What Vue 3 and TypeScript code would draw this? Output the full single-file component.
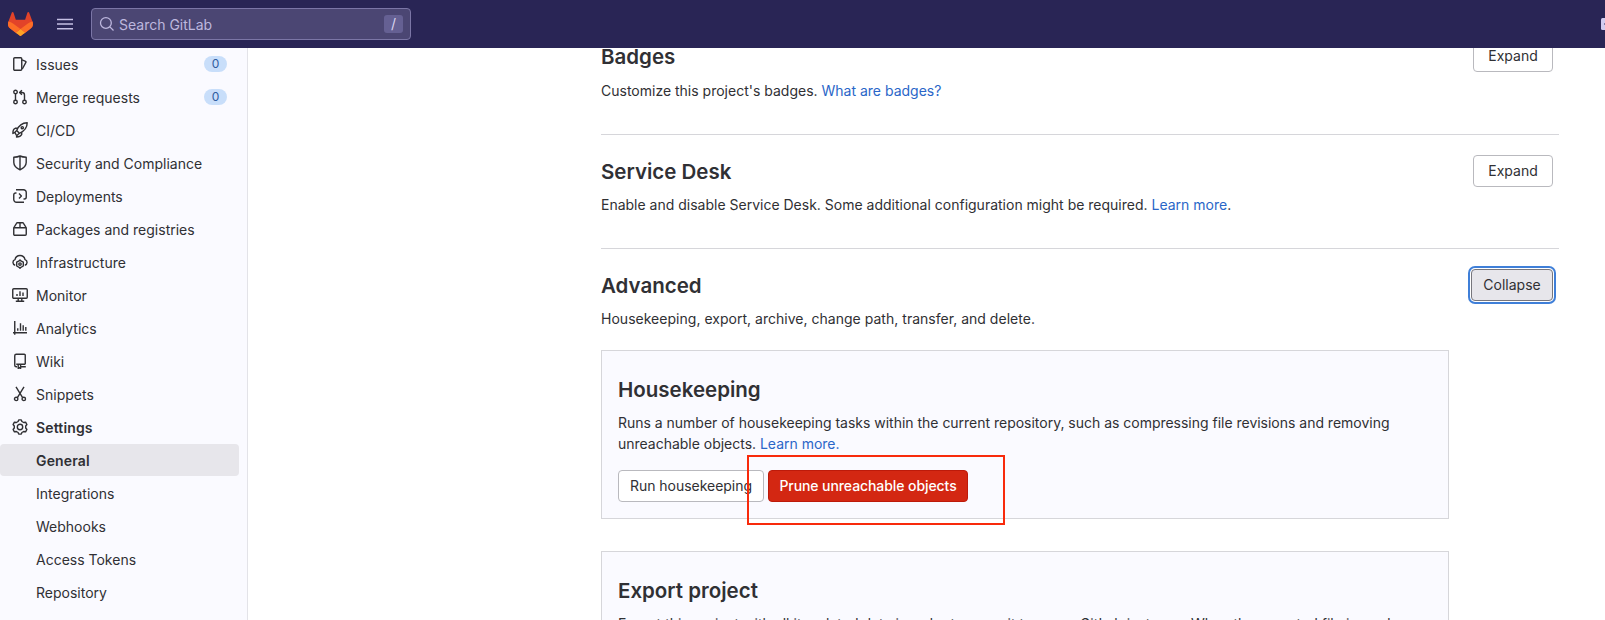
<script setup lang="ts">
interface NavItem {
  label: string
  icon: string
  count?: number
}

const navItems: NavItem[] = [
  { label: 'Issues', icon: 'issues', count: 0 },
  { label: 'Merge requests', icon: 'merge', count: 0 },
  { label: 'CI/CD', icon: 'rocket' },
  { label: 'Security and Compliance', icon: 'shield' },
  { label: 'Deployments', icon: 'deployments' },
  { label: 'Packages and registries', icon: 'package' },
  { label: 'Infrastructure', icon: 'cloud' },
  { label: 'Monitor', icon: 'monitor' },
  { label: 'Analytics', icon: 'chart' },
  { label: 'Wiki', icon: 'book' },
  { label: 'Snippets', icon: 'snippet' },
  { label: 'Settings', icon: 'settings' },
]

const settingsItems: string[] = ['General', 'Integrations', 'Webhooks', 'Access Tokens', 'Repository']

const icons: Record<string, string[]> = {
  issues: [
    'M2.75 1.75h6a1 1 0 0 1 1 1v10.5a1 1 0 0 1-1 1h-6a1 1 0 0 1-1-1V2.75a1 1 0 0 1 1-1z',
    'M10 3.9l3.6 1.4a.7.7 0 0 1 .4.9L10.3 13',
  ],
  merge: [
    'M3.5 4.9v6.2M12.5 11.1V6a2.5 2.5 0 0 0-2.5-2.5H8M9.9 1.2L7.6 3.5l2.3 2.3',
    'M3.5 1.2a1.75 1.75 0 1 1 0 3.5a1.75 1.75 0 1 1 0-3.5z',
    'M3.5 11.2a1.75 1.75 0 1 1 0 3.5a1.75 1.75 0 1 1 0-3.5z',
    'M12.5 11.2a1.75 1.75 0 1 1 0 3.5a1.75 1.75 0 1 1 0-3.5z',
  ],
  rocket: [
    'M4.7 8.6C6.5 4 10 .9 15.2.8c0 5.2-3.2 8.5-7.8 10.5z',
    'M5.6 6.3H3.2C1.6 7 .8 9 .9 11.5l2-1.2M9.7 10.2v2.3c-.8 1.6-2.6 2.5-5.2 2.5l.8-2M4.7 8.6l-1.8 1.7 1.3 2.7 1.2.1 2-1.8',
    'M10.3 4.6a1.1 1.1 0 1 1 0 2.2a1.1 1.1 0 1 1 0-2.2z',
  ],
  shield: [
    'M8 1c2 .9 3.9 1.2 6.2 1.3v5.2c0 3.4-2.6 5.6-6.2 7.4-3.6-1.8-6.2-4-6.2-7.4V2.3C4.1 2.2 6 1.9 8 1zM8 1v13.8',
  ],
  deployments: [
    'M4 1.75h7.5a2.75 2.75 0 0 1 2.75 2.75v4.6a1.9 1.9 0 0 1-1.9 1.9H11.5',
    'M12 14.25H4.5a2.75 2.75 0 0 1-2.75-2.75V6.9a1.9 1.9 0 0 1 1.9-1.9H4.5',
    'M7 5.6L9.4 8 7 10.4',
  ],
  package: [
    'M1.75 6.75h12.5v6.5a1 1 0 0 1-1 1H2.75a1 1 0 0 1-1-1zM1.75 6.75L4.5 2.3a1 1 0 0 1 .9-.55h5.2a1 1 0 0 1 .9.55l2.75 4.45M8 1.75v5',
  ],
  cloud: [
    'M3.2 11.2a2.9 2.9 0 0 1-.2-5.6A5.1 5.1 0 0 1 13 5.6a2.9 2.9 0 0 1-.2 5.6',
    'M8 6.3l3.3 1.9v3.8L8 13.9l-3.3-1.9V8.2z',
    'M8 8.9a1.2 1.2 0 1 1 0 2.4a1.2 1.2 0 1 1 0-2.4z',
    'M8 5.6v1M8 13.6v1.2',
  ],
  monitor: [
    'M1.75 1.75h12.5a1 1 0 0 1 1 1v7.5a1 1 0 0 1-1 1H1.75a1 1 0 0 1-1-1v-7.5a1 1 0 0 1 1-1z',
    'M5 7v1.9M8 4.3v4.6M11 5.6v3.3M6.2 11.5v2.6M9.8 11.5v2.6M3.8 14.25h8.4',
  ],
  chart: ['M2.75 1v13.7M1 12.75h14M5.75 8.3v2.4M8.5 3.3v7.4M11.2 5.2v5.5M13.8 7v3.7'],
  book: [
    'M13.25 11.25V2.25a1 1 0 0 0-1-1H4.25a1.5 1.5 0 0 0-1.5 1.5v9.5a1.5 1.5 0 0 0 1.5 1.5H5M4.25 11.25h9M8.7 13.75h5.1M6.2 11.5v4l1.2-.9 1.2.9v-4',
  ],
  snippet: [
    'M4 .8l6.6 10.8M12 .8L5.4 11.6',
    'M4.2 11.2a1.7 1.7 0 1 1 0 3.4a1.7 1.7 0 1 1 0-3.4z',
    'M11.8 11.2a1.7 1.7 0 1 1 0 3.4a1.7 1.7 0 1 1 0-3.4z',
  ],
  settings: [
    'M6.7.9h2.6l.6 1.6 1.7 1 2-.3 1.3 2.3L13.7 7v2l1.2 1.5-1.3 2.3-2-.3-1.7 1-.6 1.6H6.7l-.6-1.6-1.7-1-2 .3-1.300-2.300L2.300 9V7L1.100 5.500l1.300-2.300 2 .3 1.700-1z',
    'M8 5.3a2.7 2.7 0 1 1 0 5.4a2.7 2.7 0 1 1 0-5.4z',
  ],
}
</script>

<template>
  <div class="page">
    <header class="topbar">
      <svg class="logo" viewBox="0 0 25 24" width="25" height="24">
        <path fill="#e24329" d="m24.507 9.5-.034-.09L21.082.562a.896.896 0 0 0-1.694.091l-2.29 7.01H7.825L5.535.653a.898.898 0 0 0-1.694-.09L.451 9.411.416 9.5a6.297 6.297 0 0 0 2.09 7.278l.012.01.03.022 5.16 3.867 2.56 1.935 1.554 1.176a1.051 1.051 0 0 0 1.268 0l1.555-1.176 2.56-1.935 5.197-3.89.014-.01A6.297 6.297 0 0 0 24.507 9.5Z" />
        <path fill="#fc6d26" d="m24.507 9.5-.034-.09a11.44 11.44 0 0 0-4.56 2.051l-7.447 5.632 4.742 3.584 5.197-3.89.014-.01A6.297 6.297 0 0 0 24.507 9.5Z" />
        <path fill="#fca326" d="m7.707 20.677 2.56 1.935 1.555 1.176a1.051 1.051 0 0 0 1.268 0l1.555-1.176 2.56-1.935-4.743-3.584-4.755 3.584Z" />
        <path fill="#fc6d26" d="M5.01 11.461a11.43 11.43 0 0 0-4.56-2.05L.416 9.5a6.297 6.297 0 0 0 2.09 7.278l.012.01.03.022 5.16 3.867 4.745-3.584-7.444-5.632Z" />
      </svg>
      <svg class="burger" viewBox="0 0 16 16" width="16" height="16">
        <path d="M0 3.5h16M0 8.1h16M0 12.7h16" />
      </svg>
      <div class="search">
        <svg viewBox="0 0 16 16" width="16" height="16">
          <path d="M6.9 1.55a5.4 5.4 0 1 1 0 10.8a5.4 5.4 0 1 1 0-10.8zM10.9 10.9l3.6 3.6" />
        </svg>
        <span class="search-text">Search GitLab</span>
        <kbd>/</kbd>
      </div>
      <svg class="create" viewBox="0 0 16 12" width="16" height="12">
        <rect width="16" height="12" rx="1.5" fill="#d1cbf0" />
        <path d="M3.2 6h7M6.7 2.5v7" stroke="#4b4673" stroke-width="1.5" />
      </svg>
    </header>

    <div class="body">
      <nav class="sidebar">
        <a v-for="item in navItems" :key="item.label" class="nav-row" :class="{ current: item.label === 'Settings' }">
          <svg class="nav-icon" viewBox="0 0 16 16" width="16" height="16">
            <path v-for="d in icons[item.icon]" :key="d" :d="d" />
          </svg>
          <span class="nav-label">{{ item.label }}</span>
          <span v-if="item.count !== undefined" class="count">{{ item.count }}</span>
        </a>
        <a v-for="name in settingsItems" :key="name" class="nav-row sub" :class="{ active: name === 'General' }">
          <span class="nav-label">{{ name }}</span>
        </a>
      </nav>

      <main class="content">
        <section class="setting first">
          <div class="setting-text">
            <h4>Badges</h4>
            <p>Customize this project's badges. <a class="link">What are badges?</a></p>
          </div>
          <button class="btn">Expand</button>
        </section>
        <section class="setting">
          <div class="setting-text">
            <h4>Service Desk</h4>
            <p>Enable and disable Service Desk. Some additional configuration might be required. <a class="link">Learn more</a>.</p>
          </div>
          <button class="btn">Expand</button>
        </section>
        <section class="setting last">
          <div class="setting-text">
            <h4>Advanced</h4>
            <p class="wide">Housekeeping, export, archive, change path, transfer, and delete.</p>
          </div>
          <button class="btn focused">Collapse</button>
        </section>

        <div class="cards">
          <section class="card">
            <h4>Housekeeping</h4>
            <p class="tight">
              Runs a number of housekeeping tasks within the current repository, such as compressing file revisions and removing<br />
              unreachable objects. <a class="link">Learn more.</a>
            </p>
            <div class="actions">
              <button class="btn run">Run housekeeping</button>
              <button class="btn danger">Prune unreachable objects</button>
              <div class="highlight"></div>
            </div>
          </section>
          <section class="card">
            <h4>Export project</h4>
            <p class="wide">Export this project with all its related data in order to move it to a new GitLab instance. When the exported file is ready,</p>
          </section>
        </div>
      </main>
    </div>
  </div>
</template>

<style>
body {
  overflow: hidden;
}
</style>

<style scoped>
.page {
  width: 1605px;
  height: 620px;
  overflow: hidden;
  display: flex;
  flex-direction: column;
  background: #fff;
  color: #303034;
  font-family: Inter, 'Noto Sans', sans-serif;
  font-size: 14px;
  line-height: 21px;
}
.topbar {
  flex: none;
  height: 48px;
  box-sizing: border-box;
  padding-left: 8px;
  display: flex;
  align-items: center;
  background: #292555;
  position: relative;
  z-index: 1;
}
.burger {
  margin: 0 18px 0 24px;
  fill: none;
  stroke: #c5c0e4;
  stroke-width: 1.5;
}
.search {
  width: 320px;
  height: 32px;
  box-sizing: border-box;
  padding: 0 7px;
  border: 1px solid #7b76a6;
  border-radius: 4px;
  background: #4b4673;
  display: flex;
  align-items: center;
  color: #bdb7de;
}
.search svg {
  fill: none;
  stroke: #bdb7de;
  stroke-width: 1.3;
}
.search-text {
  flex: 1;
  margin-left: 4px;
  padding-top: 1px;
}
kbd {
  width: 19px;
  height: 18px;
  border-radius: 3px;
  background: #656093;
  color: #d9d5f0;
  font: 14px/18px Inter, sans-serif;
  text-align: center;
}
.create {
  flex: none;
  margin-left: auto;
  margin-right: -12px;
}
.body {
  flex: 1;
  min-height: 0;
  display: flex;
}
.sidebar {
  flex: none;
  width: 248px;
  box-sizing: border-box;
  border-right: 1px solid #e3e3e8;
  background: #fafaff;
}
.nav-row {
  height: 32px;
  margin-bottom: 1px;
  margin-right: 8px;
  padding-left: 12px;
  padding-right: 12px;
  display: flex;
  align-items: center;
}
.nav-icon {
  flex: none;
  margin-right: 8px;
  fill: none;
  stroke: #303034;
  stroke-width: 1.4;
  stroke-linejoin: round;
}
.nav-label {
  flex: 1;
}
.current,
.active {
  font-weight: 600;
}
.current .nav-label,
.active .nav-label {
  letter-spacing: 0.15px;
}
.sub {
  padding-left: 36px;
}
.active {
  border-radius: 4px;
  background: #e7e6eb;
}
.count {
  width: 23px;
  height: 16px;
  border-radius: 8px;
  background: #c8defa;
  color: #2f5ca0;
  font-size: 12px;
  line-height: 16px;
  text-align: center;
}
.content {
  flex: none;
  width: 958px;
  margin-left: 353px;
  margin-top: -27px;
}
.setting {
  height: 114px;
  box-sizing: border-box;
  padding-top: 20px;
  padding-right: 6px;
  display: flex;
  justify-content: space-between;
  align-items: flex-start;
  border-bottom: 1px solid #d6d6da;
}
.setting.first {
  padding-top: 19px;
}
.setting.last {
  border-bottom: 0;
  height: 101px;
}
h4,
p {
  margin: 0;
}
h4 {
  font-size: 20.5px;
  line-height: 32px;
  font-weight: 600;
}
.setting h4 {
  margin-top: 1px;
}
.setting p {
  margin-top: 6px;
}
.setting.first p {
  margin-top: 7px;
}
.wide {
  letter-spacing: 0.02px;
}
.tight {
  letter-spacing: -0.015px;
}
.link {
  color: #2a66c8;
}
.btn {
  flex: none;
  height: 32px;
  width: 80px;
  padding: 0;
  border: 1px solid #b9b9be;
  border-radius: 4px;
  background: #fff;
  color: #303034;
  font: inherit;
  line-height: 30px;
}
.btn.focused {
  width: 82px;
  border-color: #77767c;
  background: #e7e6eb;
  box-shadow: 0 0 0 1px #fff, 0 0 0 3px #3f7fd8;
}
.cards {
  width: 848px;
}
.card {
  height: 169px;
  box-sizing: border-box;
  padding: 23px 16px 16px;
  margin-bottom: 32px;
  border: 1px solid #d6d6da;
  background: #fafaff;
  white-space: nowrap;
}
.card p {
  margin-top: 6px;
}
.actions {
  margin-top: 16px;
  display: flex;
  gap: 4px;
  position: relative;
}
.btn.run {
  width: 146px;
  letter-spacing: -0.03px;
}
.btn.danger {
  width: 200px;
  border-color: #bd1a0a;
  background: #d32712;
  color: #fff;
  font-weight: 500;
  letter-spacing: -0.08px;
}
.highlight {
  position: absolute;
  left: 129px;
  top: -15px;
  width: 258px;
  height: 70px;
  box-sizing: border-box;
  border: 2px solid #f82a0c;
}
</style>
